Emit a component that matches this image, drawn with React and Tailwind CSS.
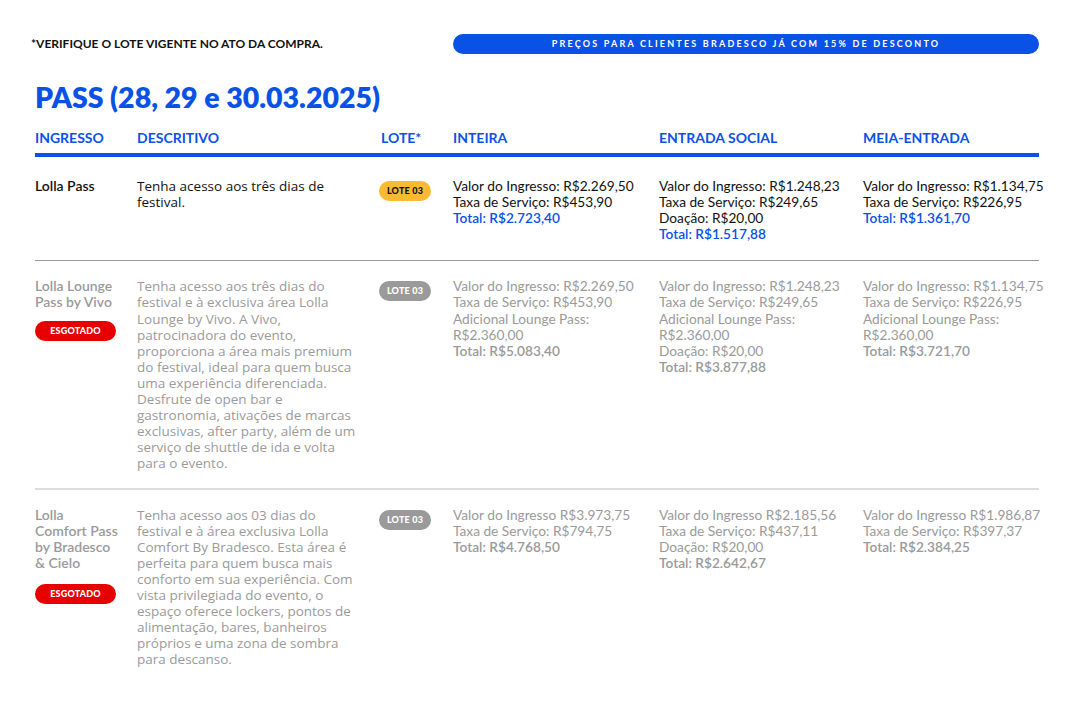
import React from "react";

const BLUE = "text-[#0a52e6]";

function Lote({ gray }) {
  return (
    <span
      className={`inline-flex h-[20px] w-[52px] items-center justify-center rounded-full text-[9px] font-black tracking-[0.2px] ${
        gray ? "bg-[#9a9a9a] text-white" : "bg-[#fbb934] text-[#111]"
      }`}
    >
      LOTE 03
    </span>
  );
}

function Esgotado({ mt }) {
  return (
    <span className={`${mt} inline-flex h-[20px] w-[81px] items-center justify-center rounded-full bg-[#e60000] text-[9px] font-black tracking-[0.2px] text-white`}>
      ESGOTADO
    </span>
  );
}

function Price({ lines, total, active }) {
  return (
    <div className={`whitespace-nowrap text-[13.7px] ${active ? "text-[#111]" : "text-[#9a9a9a]"}`}>
      {lines.map((l, i) => (
        <div key={i}>{l}</div>
      ))}
      <div className={`font-semibold ${active ? BLUE : ""}`}>{total}</div>
    </div>
  );
}

const rows = [
  {
    active: true,
    name: ["Lolla Pass"],
    sold: false,
    desc: ["Tenha acesso aos três dias de", "festival."],
    inteira: {
      lines: ["Valor do Ingresso: R$2.269,50", "Taxa de Serviço: R$453,90"],
      total: "Total: R$2.723,40",
    },
    social: {
      lines: ["Valor do Ingresso: R$1.248,23", "Taxa de Serviço: R$249,65", "Doação: R$20,00"],
      total: "Total: R$1.517,88",
    },
    meia: {
      lines: ["Valor do Ingresso: R$1.134,75", "Taxa de Serviço: R$226,95"],
      total: "Total: R$1.361,70",
    },
    pad: "pt-[21px] pb-[18px]",
    border: "border-b border-[#9a9a9a]",
  },
  {
    active: false,
    name: ["Lolla Lounge", "Pass by Vivo"],
    sold: true,
    soldMt: "mt-[10px]",
    desc: [
      "Tenha acesso aos três dias do",
      "festival e à exclusiva área Lolla",
      "Lounge by Vivo. A Vivo,",
      "patrocinadora do evento,",
      "proporciona a área mais premium",
      "do festival, ideal para quem busca",
      "uma experiência diferenciada.",
      "Desfrute de open bar e",
      "gastronomia, ativações de marcas",
      "exclusivas, after party, além de um",
      "serviço de shuttle de ida e volta",
      "para o evento.",
    ],
    inteira: {
      lines: ["Valor do Ingresso: R$2.269,50", "Taxa de Serviço: R$453,90", "Adicional Lounge Pass:", "R$2.360,00"],
      total: "Total: R$5.083,40",
    },
    social: {
      lines: ["Valor do Ingresso: R$1.248,23", "Taxa de Serviço: R$249,65", "Adicional Lounge Pass:", "R$2.360,00", "Doação: R$20,00"],
      total: "Total: R$3.877,88",
    },
    meia: {
      lines: ["Valor do Ingresso: R$1.134,75", "Taxa de Serviço: R$226,95", "Adicional Lounge Pass:", "R$2.360,00"],
      total: "Total: R$3.721,70",
    },
    pad: "pt-[17px] pb-[16px]",
    border: "border-b-2 border-[#dddddd]",
  },
  {
    active: false,
    name: ["Lolla", "Comfort Pass", "by Bradesco", "& Cielo"],
    sold: true,
    soldMt: "mt-[13px]",
    desc: [
      "Tenha acesso aos 03 dias do",
      "festival e à área exclusiva Lolla",
      "Comfort By Bradesco. Esta área é",
      "perfeita para quem busca mais",
      "conforto em sua experiência. Com",
      "vista privilegiada do evento, o",
      "espaço oferece lockers, pontos de",
      "alimentação, bares, banheiros",
      "próprios e uma zona de sombra",
      "para descanso.",
    ],
    inteira: {
      lines: ["Valor do Ingresso R$3.973,75", "Taxa de Serviço: R$794,75"],
      total: "Total: R$4.768,50",
    },
    social: {
      lines: ["Valor do Ingresso R$2.185,56", "Taxa de Serviço: R$437,11", "Doação: R$20,00"],
      total: "Total: R$2.642,67",
    },
    meia: {
      lines: ["Valor do Ingresso R$1.986,87", "Taxa de Serviço: R$397,37"],
      total: "Total: R$2.384,25",
    },
    pad: "pt-[17px] pb-[16px]",
    border: "",
  },
];

const GRID = "grid grid-cols-[102px_244px_72px_206px_204px_176px]";

export default function App() {
  return (
    <div
      className="h-[705px] w-[1080px] bg-white pl-[35px] pt-[34px]"
      style={{ fontFamily: "Lato, 'Open Sans', sans-serif" }}
    >
      <div className="w-[1004px]">
        <div className="flex items-center">
          <div className="ml-[-4px] w-[422px] text-[12px] font-bold text-[#111]">
            *VERIFIQUE O LOTE VIGENTE NO ATO DA COMPRA.
          </div>
          <div className="flex h-[20px] flex-1 items-center justify-center rounded-full bg-[#0a52e6] text-[9px] font-bold tracking-[2.2px] text-white">
            PREÇOS PARA CLIENTES BRADESCO JÁ COM 15% DE DESCONTO
          </div>
        </div>

        <h1 className={`mt-[26px] text-[28.5px] font-extrabold leading-[34px] ${BLUE}`}>
          PASS (28, 29 e 30.03.2025)
        </h1>

        <div className={`${GRID} mt-[15px] pb-[6px] text-[14px] font-bold leading-[18px] ${BLUE}`}>
          <div>INGRESSO</div>
          <div>DESCRITIVO</div>
          <div>LOTE*</div>
          <div>INTEIRA</div>
          <div>ENTRADA SOCIAL</div>
          <div>MEIA-ENTRADA</div>
        </div>
        <div className="h-[4px] bg-[#0a52e6]" />

        {rows.map((r, i) => (
          <div key={i} className={`${GRID} ${r.pad} ${r.border} text-[14px] leading-[16.1px]`}>
            <div className={`font-semibold ${r.active ? "text-[#111]" : "text-[#9a9a9a]"}`}>
              {r.name.map((n, j) => (
                <div key={j} className="whitespace-nowrap">{n}</div>
              ))}
              {r.sold && <Esgotado mt={r.soldMt} />}
            </div>
            <div
              className={`text-[13.5px] ${r.active ? "text-[#111]" : "text-[#9a9a9a]"}`}
              style={{ fontFamily: "'Open Sans', Lato, sans-serif" }}
            >
              {r.desc.map((d, j) => (
                <div key={j} className="whitespace-nowrap">{d}</div>
              ))}
            </div>
            <div className="ml-[-2px]">
              <div className="mt-[3px]">
                <Lote gray={!r.active} />
              </div>
            </div>
            <Price {...r.inteira} active={r.active} />
            <Price {...r.social} active={r.active} />
            <Price {...r.meia} active={r.active} />
          </div>
        ))}
      </div>
    </div>
  );
}
